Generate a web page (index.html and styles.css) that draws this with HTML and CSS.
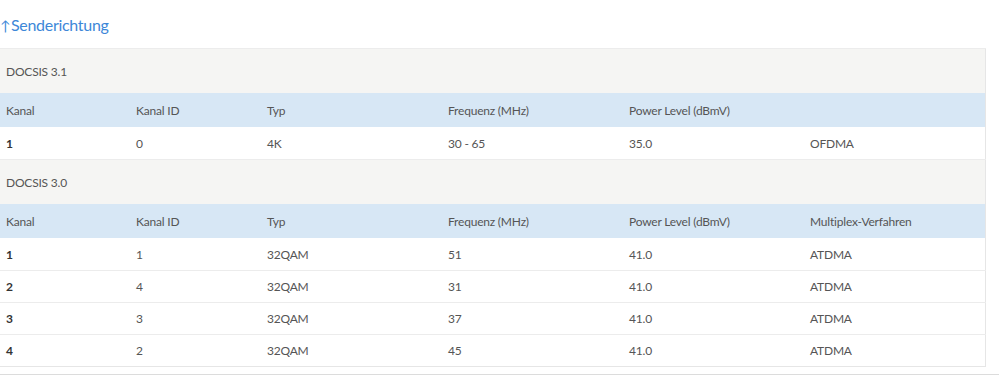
FILE: index.html
```html
<!DOCTYPE html>
<html lang="de">
<head>
<meta charset="utf-8">
<link rel="stylesheet" href="styles.css">
</head>
<body>
<div class="section">
  <h2 class="title"><span class="arrow">↑</span>Senderichtung</h2>
  <table class="tbl">
    <colgroup>
      <col class="c1"><col class="c2"><col class="c3"><col class="c4"><col class="c5"><col class="c6">
    </colgroup>
    <tbody>
      <tr class="group"><td colspan="6">DOCSIS 3.1</td></tr>
      <tr class="head"><td>Kanal</td><td>Kanal ID</td><td>Typ</td><td>Frequenz (MHz)</td><td>Power Level (dBmV)</td><td></td></tr>
      <tr class="row"><td class="k">1</td><td>0</td><td>4K</td><td>30 - 65</td><td>35.0</td><td>OFDMA</td></tr>
      <tr class="group"><td colspan="6">DOCSIS 3.0</td></tr>
      <tr class="head"><td>Kanal</td><td>Kanal ID</td><td>Typ</td><td>Frequenz (MHz)</td><td>Power Level (dBmV)</td><td>Multiplex-Verfahren</td></tr>
      <tr class="row"><td class="k">1</td><td>1</td><td>32QAM</td><td>51</td><td>41.0</td><td>ATDMA</td></tr>
      <tr class="row"><td class="k">2</td><td>4</td><td>32QAM</td><td>31</td><td>41.0</td><td>ATDMA</td></tr>
      <tr class="row"><td class="k">3</td><td>3</td><td>32QAM</td><td>37</td><td>41.0</td><td>ATDMA</td></tr>
      <tr class="row"><td class="k">4</td><td>2</td><td>32QAM</td><td>45</td><td>41.0</td><td>ATDMA</td></tr>
    </tbody>
  </table>
  <div class="rule"></div>
</div>
</body>
</html>
```

FILE: styles.css
```css
html, body {
  margin: 0;
  padding: 0;
  background: #fff;
}
body {
  font-family: "Lato", "Open Sans", sans-serif;
  color: #444;
}
.section {
  width: 999px;
}
.title {
  margin: 0;
  height: 48px;
  line-height: 50px;
  font-size: 16px;
  font-weight: 400;
  letter-spacing: -0.3px;
  color: #3d87d8;
}
.arrow {
  display: inline-block;
  width: 10px;
  margin-right: 1px;
  font-size: 14px;
}
.tbl {
  width: 986px;
  border-collapse: collapse;
  table-layout: fixed;
  font-size: 12px;
  letter-spacing: -0.2px;
  border-top: 1px solid #e6e6e6;
  border-right: 1px solid #e6e6e6;
  border-bottom: 1px solid #e6e6e6;
}
.c1 { width: 130px; }
.c2 { width: 131px; }
.c3 { width: 181px; }
.c4 { width: 181px; }
.c5 { width: 181px; }
.tbl td {
  padding: 0 0 0 6px;
  white-space: nowrap;
}
.group td {
  height: 44px;
  background: #f5f5f3;
  color: #555;
  border-top: 1px solid #ececec;
}
.head td {
  height: 34px;
  background: #d7e7f5;
  color: #555;
}
.row td {
  height: 31px;
  background: #fff;
  border-top: 1px solid #ececec;
  color: #555;
}
.head + .row td {
  border-top: none;
  height: 32px;
}
.row td.k {
  font-weight: 700;
  color: #333;
}
.rule {
  margin-top: 7px;
  height: 1px;
  background: #dcdcdc;
}
```
